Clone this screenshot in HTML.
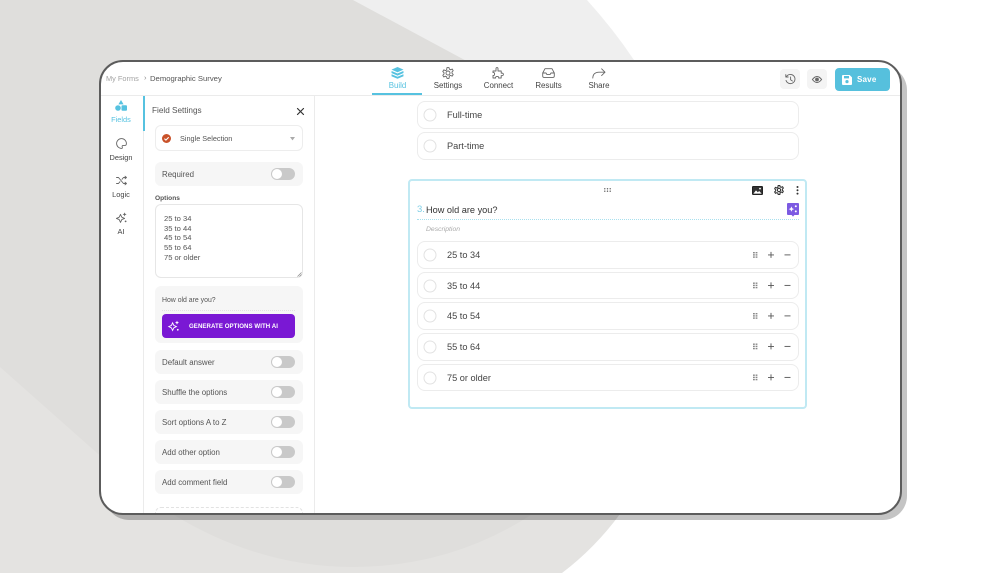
<!DOCTYPE html>
<html><head><meta charset="utf-8"><title>Demographic Survey</title>
<style>
html,body{margin:0;padding:0;background:#fff}
body{width:1000px;height:573px;overflow:hidden;position:relative;font-family:"Liberation Sans",sans-serif}
#bg{position:absolute;left:0;top:0}
#shadow{position:absolute;left:105px;top:66px;width:802px;height:454px;border-radius:24px;background:rgba(0,0,0,.23)}
#card{position:absolute;left:99px;top:60px;width:799px;height:451px;border:2px solid #5c5c5c;border-radius:24px;background:#fff;overflow:hidden}
#in{position:absolute;left:-101px;top:-62px;width:1000px;height:573px;filter:blur(.3px)}
.t{position:absolute;white-space:nowrap;line-height:0;height:0;font-size:7.9px;color:#555}
.c{transform:translateX(-50%)}
.b{position:absolute;box-sizing:border-box}
.row{position:absolute;left:155px;width:148px;height:24px;background:#f6f6f6;border-radius:6px}
.row span{position:absolute;left:7px;top:13px;line-height:0;font-size:7.9px;color:#555;white-space:nowrap}
.row i{position:absolute;left:116px;top:6px;width:24px;height:12px;border-radius:6px;background:#c9c9c9}
.row i:after{content:"";position:absolute;left:1px;top:1px;width:10px;height:10px;border-radius:50%;background:#fff}
.opt{position:absolute;left:417px;width:382px;height:28px;box-sizing:border-box;border:1px solid #ececec;border-radius:8px;background:#fff}
.opt b{position:absolute;left:6px;top:7px;width:13px;height:13px;box-sizing:border-box;border:1px solid #e2e2e2;border-radius:50%;transform:translate(-.5px,-.5px)}
.opt span{position:absolute;left:29px;top:12.5px;line-height:0;font-size:9.2px;color:#444;white-space:nowrap}
svg{position:absolute;overflow:visible}
.ic{fill:none;stroke:#666;stroke-width:.9;stroke-linecap:round;stroke-linejoin:round}
</style></head><body>
<svg id="bg" width="1000" height="573" viewBox="0 0 1000 573">
<path d="M0,300L700,300L620,514Q595,548 562,573L0,573Z" fill="#e4e3e1"/>
<path d="M353,0L587,0Q614,30 634,60L700,300L500,300Z" fill="#efefef"/>
<path d="M0,0L353,0L500,79L620,300L531,515Q450,567 353,567Q260,567 174,515L97,453L0,367Z" fill="#dfdedc"/>
</svg>
<div id="shadow"></div>
<div id="card"><div id="in">

<div class="b" style="left:101px;top:95px;width:800px;height:1px;background:#ebebeb"></div>
<div class="b" style="left:143px;top:96px;width:1px;height:420px;background:#ebebeb"></div>
<div class="b" style="left:314px;top:96px;width:1px;height:420px;background:#ebebeb"></div>
<div class="b" style="left:143px;top:96px;width:2px;height:35px;background:#56c2e0"></div>

<div class="t" style="left:106px;top:79px;color:#a3a3a3;font-size:7.4px">My Forms</div>
<div class="t" style="left:144px;top:78px;color:#888;font-size:7.5px">›</div>
<div class="t" style="left:150px;top:79px;font-size:7.7px">Demographic Survey</div>

<!-- tabs -->
<svg style="left:391px;top:67px" width="13" height="12" viewBox="0 0 13 12"><path d="M6.5 0L12.5 2.6L6.5 5.2L.5 2.6Z" fill="#56c2e0"/><path d="M.6 4L6.5 6.5L12.4 4L12.5 6L6.5 8.6L.5 6Z" fill="#56c2e0"/><path d="M.6 7.2L6.5 9.7L12.4 7.2L12.5 9.2L6.5 11.8L.5 9.2Z" fill="#56c2e0"/></svg>
<div class="t c" style="left:397.5px;top:86px;color:#56c2e0">Build</div>
<div class="b" style="left:372px;top:93px;width:50px;height:2px;background:#56c2e0"></div>
<svg style="left:442px;top:67px" width="12" height="12" viewBox="0 0 12 12" class="ic"><circle cx="6" cy="6" r="2"/><path d="M5 .6h2l.4 1.6 1.3.6 1.5-.8 1 1.7-1.2 1.2v1.4l1.2 1.2-1 1.7-1.5-.8-1.3.6L7 11.4H5l-.4-1.6-1.3-.6-1.5.8-1-1.7 1.2-1.2V5.7L.8 4.5l1-1.7 1.5.8 1.3-.6Z"/></svg>
<div class="t c" style="left:448px;top:86px;color:#444">Settings</div>
<svg style="left:492px;top:67px" width="12" height="13" viewBox="0 0 12 13" class="ic"><path d="M4 4V1.6Q4 .6 5 .6T6 1.6V4H9.2V6.2Q11.4 5.8 11.4 7.4T9.2 8.6V11H6.6Q7 9.4 5.2 9.4T3.6 11H1V8.4Q2.6 8.8 2.6 7T1 5.6V4Z"/></svg>
<div class="t c" style="left:498.5px;top:86px;color:#444">Connect</div>
<svg style="left:542px;top:68px" width="13" height="10" viewBox="0 0 13 10" class="ic"><path d="M3 .7H10L12.3 5V8Q12.3 9.4 11 9.4H2Q.7 9.4 .7 8V5ZM.7 5H4L5 6.6H8L9 5H12.3"/></svg>
<div class="t c" style="left:548.5px;top:86px;color:#444">Results</div>
<svg style="left:592px;top:68px" width="14" height="11" viewBox="0 0 14 11" class="ic"><path d="M.8 10Q1 4.4 7 4.2H13M9.6 .8L13 4.2L9.6 7.6"/></svg>
<div class="t c" style="left:599px;top:86px;color:#444">Share</div>

<!-- top right -->
<div class="b" style="left:780px;top:69px;width:20px;height:20px;border-radius:4px;background:#f4f4f4"></div>
<svg style="left:785px;top:74px" width="11" height="11" viewBox="0 0 11 11" class="ic"><path d="M1.6 2.4A4.6 4.6 0 1 1 1 6.4M.8 .6V3H3.2M5.6 3V5.8L7.4 7"/></svg>
<div class="b" style="left:807px;top:69px;width:20px;height:20px;border-radius:4px;background:#f4f4f4"></div>
<svg style="left:812px;top:76px" width="10" height="7" viewBox="0 0 10 7"><path d="M.4 3.5Q5-2.6 9.6 3.5Q5 9.6 .4 3.5Z" fill="none" stroke="#666"/><circle cx="5" cy="3.5" r="1.9" fill="#666"/></svg>
<div class="b" style="left:835px;top:68px;width:55px;height:23px;border-radius:4px;background:#56c0dd"></div>
<svg style="left:842px;top:74.5px" width="10" height="10" viewBox="0 0 10 10"><path d="M1 0H7.6L10 2.4V9Q10 10 9 10H1Q0 10 0 9V1Q0 0 1 0Z" fill="#fff"/><rect x="2" y="1" width="5" height="2.4" fill="#56c0dd"/><circle cx="5" cy="6.6" r="1.6" fill="#56c0dd"/></svg>
<div class="t" style="left:857px;top:80px;color:#fff;font-weight:bold;font-size:8px;letter-spacing:.2px">Save</div>

<!-- rail -->
<svg style="left:115px;top:100px" width="12" height="11" viewBox="0 0 12 11"><path d="M6 0L8.6 4.4H3.4Z" fill="#56c2e0"/><circle cx="3" cy="8" r="2.8" fill="#56c2e0"/><rect x="6.5" y="5.2" width="5.5" height="5.6" rx="1" fill="#56c2e0"/></svg>
<div class="t c" style="left:121px;top:120px;color:#56c2e0;font-size:7.4px">Fields</div>
<svg style="left:115.5px;top:137.5px" width="11" height="11" viewBox="0 0 11 11" class="ic"><path d="M5.5 .6A4.9 4.9 0 1 0 5.5 10.4Q6.8 10.4 6.2 9Q5.8 7.4 7.4 7.4H9Q10.4 7.4 10.4 5.5A4.9 4.9 0 0 0 5.5 .6Z"/></svg>
<div class="t c" style="left:121px;top:158px;color:#444;font-size:7.4px">Design</div>
<svg style="left:115.5px;top:175.5px" width="11" height="9" viewBox="0 0 11 9" class="ic"><path d="M.5 1.5H2.5L7.5 7.5H10.5M.5 7.5H2.5L4 5.7M6 3.3L7.5 1.5H10.5M9 .2L10.5 1.5L9 2.8M9 6.2L10.5 7.5L9 8.8"/></svg>
<div class="t c" style="left:121px;top:195px;color:#444;font-size:7.4px">Logic</div>
<svg style="left:115.5px;top:212px" width="11" height="11" viewBox="0 0 11 11" class="ic"><path d="M4.5 2.4L5.8 5.2L8.6 6.4L5.8 7.6L4.5 10.4L3.2 7.6L.4 6.4L3.2 5.2Z"/><path d="M8.6 .4L9.2 1.8L10.6 2.4L9.2 3L8.6 4.4L8 3L6.6 2.4L8 1.8Z" fill="#666" stroke="none"/><circle cx="9.6" cy="9.4" r=".9" fill="#666" stroke="none"/></svg>
<div class="t c" style="left:121px;top:232px;color:#444;font-size:7.4px">AI</div>

<!-- settings panel -->
<div class="t" style="left:152px;top:110.5px;font-size:8.2px">Field Settings</div>
<svg style="left:296.5px;top:107.5px" width="7" height="7" viewBox="0 0 7 7"><path d="M.5 .5L6.5 6.5M6.5 .5L.5 6.5" stroke="#333" stroke-width="1.2" stroke-linecap="round"/></svg>
<div class="b" style="left:155px;top:125px;width:148px;height:26px;border:1px solid #ededed;border-radius:6px"></div>
<svg style="left:162px;top:133.5px" width="9" height="9" viewBox="0 0 9 9"><circle cx="4.5" cy="4.5" r="4.5" fill="#c9522a"/><path d="M2.4 4.6L3.9 6.1L6.7 3.2" fill="none" stroke="#fff" stroke-width="1.1"/></svg>
<div class="t" style="left:180px;top:138.5px;font-size:7.3px">Single Selection</div>
<svg style="left:289.5px;top:136.5px" width="5" height="4" viewBox="0 0 5 4"><path d="M0 0H5L2.5 3.4Z" fill="#aaa"/></svg>

<div class="row" style="top:162px"><span>Required</span><i></i></div>
<div class="t" style="left:155px;top:199px;font-size:6.6px;color:#555;font-weight:bold">Options</div>
<div class="b" style="left:155px;top:204px;width:148px;height:74px;border:1px solid #e6e6e6;border-radius:6px"></div>
<div class="t" style="left:164px;top:219px;font-size:7.6px">25 to 34</div>
<div class="t" style="left:164px;top:229px;font-size:7.6px">35 to 44</div>
<div class="t" style="left:164px;top:238px;font-size:7.6px">45 to 54</div>
<div class="t" style="left:164px;top:248px;font-size:7.6px">55 to 64</div>
<div class="t" style="left:164px;top:258px;font-size:7.6px">75 or older</div>
<svg style="left:297px;top:272px" width="5" height="5" viewBox="0 0 5 5"><path d="M.5 4.5L4.5 .5M2.5 4.5L4.5 2.5" stroke="#888" stroke-width=".7"/></svg>

<div class="b" style="left:155px;top:286px;width:148px;height:57px;border-radius:6px;background:#f6f6f6"></div>
<div class="t" style="left:162px;top:301px;font-size:6.9px">How old are you?</div>
<div class="b" style="left:162px;top:310px;width:133px;height:0;border-top:1px dotted #e2e2e2"></div>
<div class="b" style="left:162px;top:314px;width:133px;height:24px;border-radius:4px;background:#7a18d4"></div>
<svg style="left:168px;top:319.5px" width="12" height="12" viewBox="0 0 12 12"><path d="M4.6 2.8L5.8 5.4L8.4 6.6L5.8 7.8L4.6 10.4L3.4 7.8L.8 6.6L3.4 5.4Z" fill="none" stroke="#fff" stroke-width=".9"/><path d="M9 .6L9.6 2L11 2.6L9.6 3.2L9 4.6L8.4 3.2L7 2.6L8.4 2Z" fill="#fff"/><circle cx="9.8" cy="9.8" r=".9" fill="#fff"/></svg>
<div class="t" style="left:189px;top:327px;color:#fff;font-weight:bold;font-size:6.1px;letter-spacing:.07px">GENERATE OPTIONS WITH AI</div>

<div class="row" style="top:350px"><span>Default answer</span><i></i></div>
<div class="row" style="top:380px"><span>Shuffle the options</span><i></i></div>
<div class="row" style="top:410px"><span>Sort options A to Z</span><i></i></div>
<div class="row" style="top:440px"><span>Add other option</span><i></i></div>
<div class="row" style="top:470px"><span>Add comment field</span><i></i></div>
<div class="b" style="left:155px;top:507px;width:148px;height:30px;border:1px dashed #e2e2e2;border-radius:6px"></div>

<!-- main -->
<div class="opt" style="top:101px"><b></b><span>Full-time</span></div>
<div class="opt" style="top:132px"><b></b><span>Part-time</span></div>

<div class="b" style="left:408px;top:179px;width:399px;height:230px;border:2px solid #c0e9f3;border-radius:4px"></div>
<svg style="left:604px;top:187.5px" width="7" height="4" viewBox="0 0 7 4" fill="#555"><circle cx=".8" cy=".8" r=".7"/><circle cx="3.5" cy=".8" r=".7"/><circle cx="6.2" cy=".8" r=".7"/><circle cx=".8" cy="3.2" r=".7"/><circle cx="3.5" cy="3.2" r=".7"/><circle cx="6.2" cy="3.2" r=".7"/></svg>
<svg style="left:752px;top:185.5px" width="11" height="9" viewBox="0 0 11 9"><rect x=".5" y=".5" width="10" height="8" rx=".6" fill="#333" stroke="#222"/><path d="M1.4 7.6L4 4.4L5.8 6.2L7.2 5L9.6 7.6Z" fill="#fff"/><circle cx="8" cy="2.6" r=".9" fill="#fff"/></svg>
<svg style="left:774px;top:185px" width="10" height="10" viewBox="0 0 12 12" fill="none" stroke="#333" stroke-width="1.3" stroke-linejoin="round"><circle cx="6" cy="6" r="2"/><path d="M5 .6h2l.4 1.6 1.3.6 1.5-.8 1 1.7-1.2 1.2v1.4l1.2 1.2-1 1.7-1.5-.8-1.3.6L7 11.4H5l-.4-1.6-1.3-.6-1.5.8-1-1.7 1.2-1.2V5.7L.8 4.5l1-1.7 1.5.8 1.3-.6Z"/></svg>
<svg style="left:796px;top:186px" width="3" height="9" viewBox="0 0 3 9" fill="#333"><circle cx="1.5" cy="1" r="1"/><circle cx="1.5" cy="4.3" r="1"/><circle cx="1.5" cy="7.6" r="1"/></svg>

<div class="t" style="left:417px;top:210px;color:#7fcfe6;font-size:9.5px">3.</div>
<div class="t" style="left:426px;top:210px;color:#333;font-size:9.2px">How old are you?</div>
<div class="b" style="left:417px;top:218.5px;width:382px;height:0;border-top:1px dotted #a8e0ee"></div>
<svg style="left:787px;top:203px" width="12" height="14" viewBox="0 0 12 14"><path d="M1 0H11Q12 0 12 1V11Q12 12 11 12H7.4L6 13.6L4.6 12H1Q0 12 0 11V1Q0 0 1 0Z" fill="#7c5ae2"/><path d="M4.4 3.4L5.2 5.3L7.1 6.1L5.2 6.9L4.4 8.8L3.6 6.9L1.7 6.1L3.6 5.3Z" fill="#fff"/><circle cx="8.8" cy="3.2" r="1" fill="#fff"/><circle cx="8.8" cy="8.4" r="1" fill="#fff"/></svg>
<div class="t" style="left:426px;top:229.5px;color:#aaa;font-size:6.8px;font-style:italic">Description</div>

<div class="opt" style="top:241px"><b></b><span>25 to 34</span></div>
<div class="opt" style="top:272px;height:27px"><b></b><span>35 to 44</span></div>
<div class="opt" style="top:302px"><b></b><span>45 to 54</span></div>
<div class="opt" style="top:333px"><b></b><span>55 to 64</span></div>
<div class="opt" style="top:364px;height:27px"><b></b><span>75 or older</span></div>

<svg style="left:750px;top:250px" width="42" height="135" viewBox="0 0 42 135">
<defs><g id="ctl"><g fill="#888"><rect x="3" y="0" width="1.8" height="1.4"/><rect x="5.6" y="0" width="1.8" height="1.4"/><rect x="3" y="2.2" width="1.8" height="1.4"/><rect x="5.6" y="2.2" width="1.8" height="1.4"/><rect x="3" y="4.4" width="1.8" height="1.4"/><rect x="5.6" y="4.4" width="1.8" height="1.4"/></g><path d="M18 2.9H24M21 -.1V5.9" stroke="#555" stroke-width=".9"/><path d="M34.5 2.9H40.5" stroke="#555" stroke-width=".9"/></g></defs>
<use href="#ctl" y="2"/><use href="#ctl" y="32.5"/><use href="#ctl" y="63"/><use href="#ctl" y="93.5"/><use href="#ctl" y="124.5"/>
</svg>

</div></div>
</body></html>
